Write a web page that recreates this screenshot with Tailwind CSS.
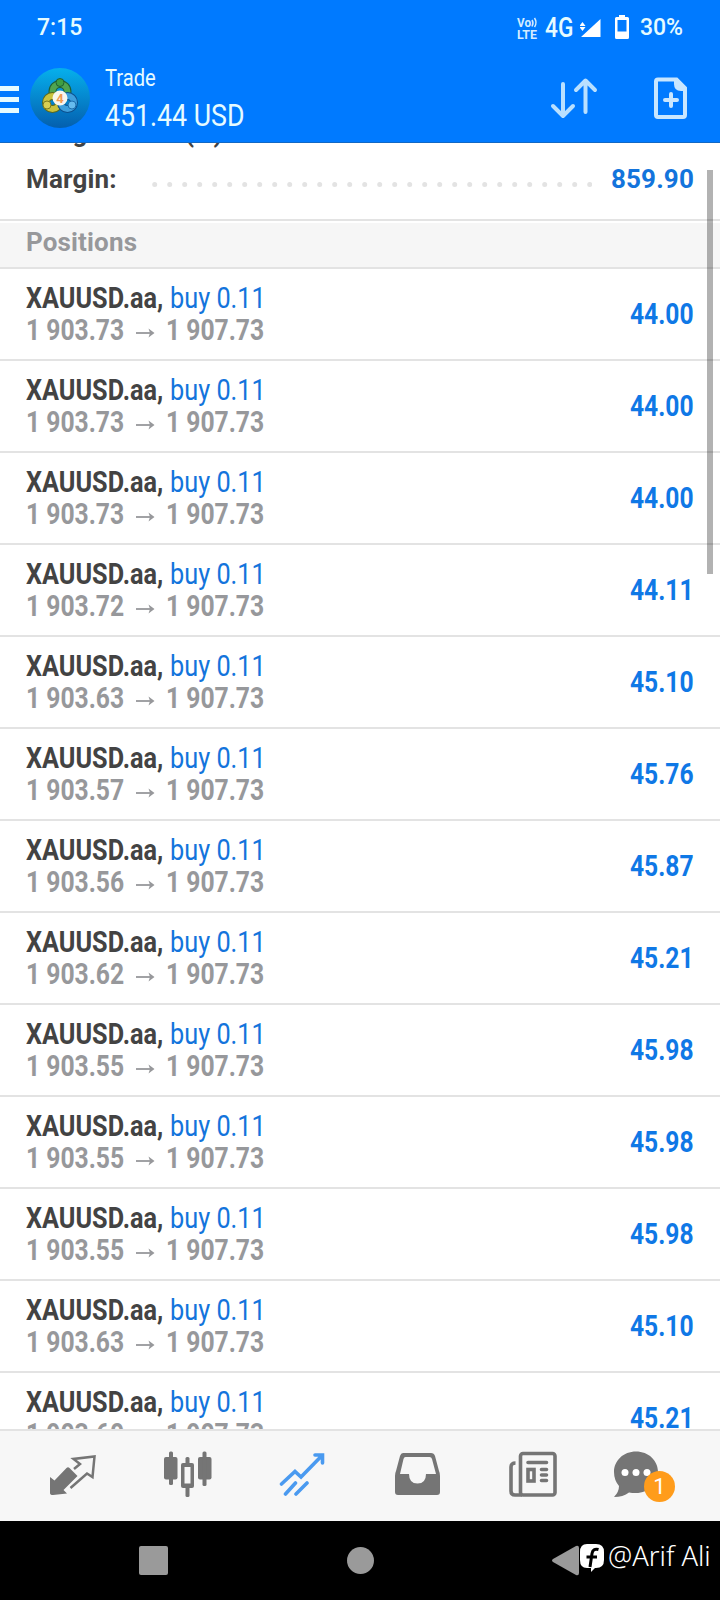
<!DOCTYPE html>
<html lang="en">
<head>
    <meta charset="UTF-8">
    <meta name="viewport" content="width=device-width, initial-scale=1.0">
    <title>Trade</title>
    <script src="https://cdn.jsdelivr.net/npm/@tailwindcss/browser@4"></script>
</head>
<body class="w-[720px] h-[1600px] overflow-hidden flex flex-col bg-white font-['Roboto',sans-serif]">

    <header class="h-[143px] shrink-0 bg-[#007aff] border-b border-[#1268c4] text-white flex flex-col">
        <!-- status bar -->
        <div class="h-[54px] px-[37px] pt-px flex items-center text-[#e6fbff]">
            <span class="text-[23px] font-medium leading-[54px]">7:15</span>
            <div class="ml-auto flex items-center">
                <svg class="w-[22px] h-[24px] mr-[6px] overflow-visible" viewBox="0 0 22 24" fill="#d4ecff" font-family="Roboto" font-weight="700">
                    <text x="0" y="11" font-size="12.500" textLength="14" lengthAdjust="spacingAndGlyphs">Vo</text>
                    <path d="M15 4q2 3 0 6.500M17.500 2q3 4.500 0 9" fill="none" stroke="#d4ecff" stroke-width="1.500"/>
                    <text x="0" y="23" font-size="13.500" textLength="20" lengthAdjust="spacingAndGlyphs">LTE</text>
                </svg>
                <span class="inline-block w-[30px] whitespace-nowrap text-[27px] font-medium leading-[54px] origin-left scale-x-[0.84]">4G</span>
                <svg class="w-[22px] h-[20px] ml-[5px] mr-[12px]" viewBox="0 0 22 20" fill="#fff">
                    <path d="M20.500 1v18H1zM2.500 4l3 4h-6zM2.500 13l3-4h-6z"/>
                </svg>
                <svg class="w-[16px] h-[26px] mr-[10px] -mt-[2px]" viewBox="0 0 16 26">
                    <path fill="#fff" fill-rule="evenodd" d="M5 1h6v2h2.500Q15 3 15 4.500v19Q15 25 13.500 25h-11Q1 25 1 23.500v-19Q1 3 2.500 3H5zM3.500 6v11.500h9V6z"/>
                </svg>
                <span class="text-[23px] font-medium leading-[54px]">30%</span>
            </div>
        </div>

        <!-- account bar -->
        <div class="flex-1 flex items-start">
            <svg class="w-[19px] h-[28px] mt-[32px]" viewBox="0 0 19 28" fill="#e6fbff">
                <path d="M0 0h19v5H0zM0 11h19v5H0zM0 22h19v5H0z"/>
            </svg>
            <svg class="w-[60px] h-[60px] ml-[11px] mt-[14px]" viewBox="0 0 60 60">
                <defs>
                    <linearGradient id="disc" x1="0" y1="0" x2="0" y2="1">
                        <stop offset="0" stop-color="#06b0ec"/>
                        <stop offset="0.550" stop-color="#0583cb"/>
                        <stop offset="1" stop-color="#045fae"/>
                    </linearGradient>
                </defs>
                <circle cx="30" cy="30" r="30" fill="url(#disc)"/>
                <g fill="none">
                    <circle cx="30" cy="23.500" r="7.500" stroke="#1e5f34" stroke-width="8"/>
                    <circle cx="30" cy="23.500" r="7.500" stroke="#4fa550" stroke-width="6"/>
                    <circle cx="22.500" cy="34.500" r="6.500" stroke="#5c691c" stroke-width="8"/>
                    <circle cx="22.500" cy="34.500" r="6.500" stroke="#c9c23e" stroke-width="6"/>
                    <circle cx="37.500" cy="34.500" r="6.500" stroke="#0d4f8d" stroke-width="8"/>
                    <circle cx="37.500" cy="34.500" r="6.500" stroke="#3f9fdc" stroke-width="6"/>
                </g>
                <circle cx="30" cy="14.500" r="4" fill="#3f9f44" stroke="#1e5f34"/>
                <circle cx="17" cy="37" r="4" fill="#d9cf53" stroke="#7c7a20"/>
                <circle cx="42" cy="37" r="4" fill="#66bbee" stroke="#1d6eae"/>
                <circle cx="30" cy="30" r="7.500" fill="#f8f6ee"/>
                <text x="30" y="34.500" text-anchor="middle" font-family="Roboto" font-size="13" font-weight="700" fill="#f29a52">4</text>
            </svg>
            <div class="ml-[15px] pt-[7px] text-[#e6fbff] whitespace-nowrap">
                <div class="text-[24px] leading-[34px] origin-left scale-x-[0.84]">Trade</div>
                <div class="text-[32px] leading-[40px] origin-left scale-x-[0.835]">451.44 USD</div>
            </div>
            <svg class="w-[48px] h-[42px] ml-auto mt-[23px]" viewBox="0 0 48 42" fill="none" stroke="#b9e0ff" stroke-width="4" stroke-linecap="round" stroke-linejoin="round">
                <path d="M13 7v31M3 29l10 10 10-10M35.500 35V4M26 13 35.500 3.500 45 13"/>
            </svg>
            <svg class="w-[36px] h-[44px] ml-[54px] mr-[32px] mt-[22px]" viewBox="0 0 36 44" fill="none" stroke="#c8e6ff" stroke-width="4">
                <path d="M6 3.500h18.500L33 12v27q0 2-2 2H6q-2 0-2-2V5.500q0-2 2-2z"/>
                <path d="M22 3h3l9 9v3h-5q-7 0-7-7z" fill="#c8e6ff" stroke="none"/>
                <path d="M19 18v12M13 24h12" stroke-linecap="round"/>
            </svg>
        </div>
    </header>

    <main class="relative flex-1 overflow-hidden">
        <!-- account summary, scrolled partly under the header -->
        <div class="h-[76px] px-[26px] text-[26px] font-bold text-[#434343] whitespace-nowrap overflow-hidden">
            <div class="h-[47px] -mt-[27px] leading-[34px] tracking-[0.15px]">Margin Level (%):</div>
            <div class="flex items-start leading-[34px]">
                <span class="w-[126px] -mt-px tracking-[0.15px]">Margin:</span>
                <svg class="w-[440px] h-[5px] mt-[19px]" viewBox="0 0 440 5">
                    <path d="M2.700 2.500h436" stroke="#e3e3e3" stroke-width="5" stroke-linecap="round" stroke-dasharray="0 15"/>
                </svg>
                <span class="ml-auto -mt-px tracking-[0.15px] text-[#1374dc]">859.90</span>
            </div>
        </div>
        <div class="h-[50px] border-y-2 border-[#e3e3e3] bg-white pt-[2px]">
            <div class="h-full bg-[#f6f6f6] px-[26px] text-[26px] leading-[38px] font-bold tracking-[0.15px] text-[#97989b]">Positions</div>
        </div>

        <div id="positions"></div>

        <div class="absolute right-[7px] top-[27px] w-[6px] h-[404px] bg-black/30"></div>
    </main>

    <nav class="h-[92px] shrink-0 border-t-2 border-[#e3e3e3] bg-[#f7f7f7] flex items-start pt-[20px] pl-[49px]">
        <svg class="w-[48px] h-[48px]" viewBox="0 0 48 48">
            <path d="M1 26l4.500 3.500L17.500 17q1.500-1.500 3 0l8 8L14.500 39l3.500 3.500L4 44q-3 0-3-2z" fill="#757575"/>
            <path d="M25 18l6-5-6.500-5L45.500 5.500 43.500 26 38 22.500 21.500 37" fill="none" stroke="#757575" stroke-width="2.500"/>
        </svg>
        <svg class="w-[48px] h-[48px] ml-[67px]" viewBox="0 0 48 48" fill="#757575">
            <rect x="0" y="6" width="13.500" height="22.500" rx="2"/><rect x="5" y="0.500" width="4" height="33.500" rx="1.500"/>
            <rect x="34" y="6" width="13.500" height="22.500" rx="2"/><rect x="38.500" y="0.500" width="4" height="34.500" rx="1.500"/>
            <rect x="21.500" y="6" width="4" height="40" rx="1.500"/><rect x="17" y="12" width="13" height="25" rx="2"/>
            <path d="M20.500 16h6v16.500h-6z" fill="#f7f7f7"/>
        </svg>
        <svg class="w-[48px] h-[48px] ml-[67px]" viewBox="0 0 48 48" fill="none" stroke="#4a9af0" stroke-width="3.600" stroke-linecap="round">
            <path d="M2.500 33l13.500-12.500 6 5.500L43 4.500M36 4h7.500v8M6.500 43l10-11M17 43l11-11"/>
        </svg>
        <svg class="w-[48px] h-[48px] ml-[67px]" viewBox="0 0 48 48">
            <path d="M9 2h28q3 0 4 3l4 15q1 2 1 5v16q0 3-3 3H4q-3 0-3-3V25q0-3 1-5L6 5q1-3 3-3z" fill="#757575"/>
            <path d="M11.500 6h24q2 0 2.500 2l4 15h-10q0 9.500-8.500 9.500T15 23H6L9.500 8q.5-2 2-2z" fill="#f7f7f7"/>
        </svg>
        <svg class="w-[48px] h-[48px] ml-[67px]" viewBox="0 0 48 48" fill="none" stroke="#757575" stroke-width="3.600">
            <rect x="11.500" y="2.500" width="34.500" height="41.500" rx="2.500"/>
            <path d="M6.500 12q-4.500 0-4.500 4v24q0 4 4 4h7"/>
            <path d="M19 11.500h18.500M32.500 18.500h5M32.500 24h5M32.500 29.500h5" stroke-linecap="round"/>
            <rect x="19" y="18.500" width="6" height="11.500"/>
        </svg>
        <div class="relative ml-[56px]">
            <svg class="w-[48px] h-[48px]" viewBox="0 0 48 48">
                <path d="M23 0.500c12.500 0 22 9 22 20.500S36 42 23 42q-4 0-7-.5-6 4.500-15 4.500 5-5 5-11Q1 29 1 21C1 9.500 10.500 .5 23 .5z" fill="#757575"/>
                <circle cx="12" cy="21.500" r="3.500" fill="#fff"/><circle cx="23" cy="21.500" r="3.500" fill="#fff"/><circle cx="34" cy="21.500" r="3.500" fill="#fff"/>
            </svg>
            <span class="absolute left-[31px] top-[20px] size-[31px] rounded-full bg-[#ff9c1b] text-white text-[22px] leading-[32px] text-center">1</span>
        </div>
    </nav>

    <!-- system navigation -->
    <footer class="relative h-[79px] shrink-0 bg-black">
        <svg class="w-[720px] h-[79px]" viewBox="0 0 720 79" fill="#9a9a9a">
            <rect x="139" y="25" width="29" height="29" rx="2"/>
            <circle cx="360.500" cy="39.500" r="13.500"/>
            <path d="M553 38l23-13q3-1 3 2v25q0 3-3 2L553 41q-2-1.500 0-3z"/>
        </svg>
        <div class="absolute left-[579px] top-[19px] flex items-center text-white whitespace-nowrap">
            <svg class="w-[26px] h-[32px]" viewBox="0 0 26 32">
                <path d="M8 4h9q8 0 8 8v8q0 8-8 8h-1l-4 4v-4H8q-7 0-7-8v-8q0-8 7-8z" fill="#fff"/>
                <path d="M19.500 9.500q-5.500-1.500-6.500 4L11 27M7.500 17H18" stroke="#000" stroke-width="3" fill="none"/>
            </svg>
            <span class="ml-[3px] text-[27px] leading-[32px] font-[350] font-['Noto_Sans',sans-serif] origin-left scale-x-[1.01]">@Arif Ali</span>
        </div>
    </footer>

    <script>
        const current = "1 907.73";
        const positions = [
            ["1 903.73", "44.00"],
            ["1 903.73", "44.00"],
            ["1 903.73", "44.00"],
            ["1 903.72", "44.11"],
            ["1 903.63", "45.10"],
            ["1 903.57", "45.76"],
            ["1 903.56", "45.87"],
            ["1 903.62", "45.21"],
            ["1 903.55", "45.98"],
            ["1 903.55", "45.98"],
            ["1 903.55", "45.98"],
            ["1 903.63", "45.10"],
            ["1 903.60", "45.21"]
        ];

        document.getElementById("positions").innerHTML = positions.map(([open, profit]) => `
            <div class="h-[92px] border-b-2 border-[#e3e3e3] px-[26px] pt-[13px] flex text-[30px] leading-8 whitespace-nowrap">
                <div>
                    <div class="flex">
                        <span class="w-[144px]"><b class="inline-block origin-left scale-x-[0.842] text-[#434343]">XAUUSD.aa,</b></span>
                        <span class="inline-block origin-left scale-x-[0.843] text-[#1374dc]">buy 0.11</span>
                    </div>
                    <div class="flex font-bold text-[#97989b]">
                        <span class="w-[109px]"><span class="inline-block origin-left scale-x-[0.822]">${open}</span></span>
                        <svg class="w-[20px] h-[10px] mt-[14px] mr-[11px]" viewBox="0 0 20 10"><path d="M1 5h15" stroke="#97989b" stroke-width="1.800"/><path d="M13.500 0.500l6 4.500-6 4.500 1.500-4.500z" fill="#97989b"/></svg>
                        <span class="inline-block origin-left scale-x-[0.822]">${current}</span>
                    </div>
                </div>
                <b class="ml-auto mt-[16px] origin-right scale-x-[0.82] h-8 text-[#0f78e6]">${profit}</b>
            </div>`).join("");
    </script>
</body>
</html>
